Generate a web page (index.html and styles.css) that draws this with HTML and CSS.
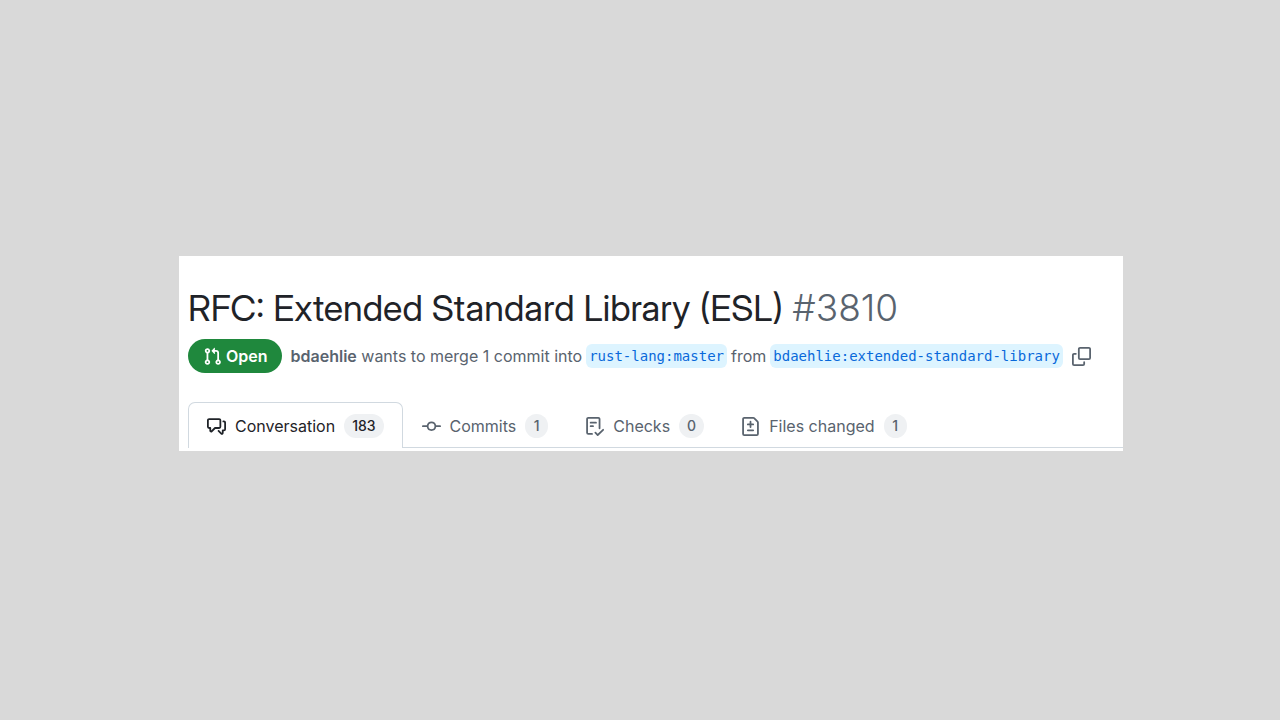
FILE: index.html
```html
<!DOCTYPE html>
<html lang="en">
<head>
<meta charset="utf-8">
<meta name="viewport" content="width=device-width, initial-scale=1">
<title>RFC: Extended Standard Library (ESL) #3810</title>
<link rel="stylesheet" href="styles.css">
</head>
<body>
<main class="pull-request">
  <header class="pr-header">
    <h1 class="pr-title">RFC: Extended Standard Library (ESL) <span class="pr-number">#3810</span></h1>
    <div class="pr-meta">
      <span class="state">
        <svg class="state-icon" viewBox="0 0 16 16" aria-hidden="true"><path d="M1.5 3.25a2.25 2.25 0 1 1 3 2.122v5.256a2.251 2.251 0 1 1-1.5 0V5.372A2.25 2.25 0 0 1 1.5 3.25Zm5.677-.177L9.573.677A.25.25 0 0 1 10 .854V2.5h1A2.5 2.5 0 0 1 13.5 5v5.628a2.251 2.251 0 1 1-1.5 0V5a1 1 0 0 0-1-1h-1v1.646a.25.25 0 0 1-.427.177L7.177 3.427a.25.25 0 0 1 0-.354ZM3.75 2.5a.75.75 0 1 0 0 1.5.75.75 0 0 0 0-1.5Zm0 9.5a.75.75 0 1 0 0 1.5.75.75 0 0 0 0-1.5Zm8.25.75a.75.75 0 1 0 1.5 0 .75.75 0 0 0-1.5 0Z"/></svg>
        Open
      </span>
      <div class="summary">
        <span><a class="author" href="#author">bdaehlie</a> wants to merge 1 commit into</span>
        <a class="branch" href="#base">rust-lang:master</a>
        <span>from</span>
        <a class="branch" href="#head">bdaehlie:extended-standard-library</a>
      </div>
      <button class="copy" type="button" aria-label="Copy branch name">
        <svg class="icon" viewBox="0 0 16 16" aria-hidden="true"><path d="M0 6.75C0 5.784.784 5 1.75 5h1.5a.75.75 0 0 1 0 1.5h-1.5a.25.25 0 0 0-.25.25v7.5c0 .138.112.25.25.25h7.5a.25.25 0 0 0 .25-.25v-1.5a.75.75 0 0 1 1.5 0v1.5A1.75 1.75 0 0 1 9.25 16h-7.5A1.75 1.75 0 0 1 0 14.25Z"/><path d="M5 1.75C5 .784 5.784 0 6.75 0h7.5C15.216 0 16 .784 16 1.75v7.5A1.75 1.75 0 0 1 14.25 11h-7.5A1.75 1.75 0 0 1 5 9.25Zm1.75-.25a.25.25 0 0 0-.25.25v7.5c0 .138.112.25.25.25h7.5a.25.25 0 0 0 .25-.25v-7.5a.25.25 0 0 0-.25-.25Z"/></svg>
      </button>
    </div>
  </header>
  <nav class="tabs" aria-label="Pull request">
    <a class="tab tab-current" href="#conversation" aria-current="page">
      <svg class="icon" viewBox="0 0 16 16" aria-hidden="true"><path d="M1.75 1h8.5c.966 0 1.75.784 1.75 1.75v5.5A1.75 1.75 0 0 1 10.25 10H7.061l-2.574 2.573A1.458 1.458 0 0 1 2 11.543V10h-.25A1.75 1.75 0 0 1 0 8.25v-5.5C0 1.784.784 1 1.75 1ZM1.5 2.75v5.5c0 .138.112.25.25.25h1a.75.75 0 0 1 .75.75v2.19l2.72-2.72a.749.749 0 0 1 .53-.22h3.5a.25.25 0 0 0 .25-.25v-5.5a.25.25 0 0 0-.25-.25h-8.5a.25.25 0 0 0-.25.25Zm13 2a.25.25 0 0 0-.25-.25h-.5a.75.75 0 0 1 0-1.5h.5c.966 0 1.75.784 1.75 1.75v5.5A1.75 1.75 0 0 1 14.25 12H14v1.543a1.458 1.458 0 0 1-2.487 1.03L9.22 12.28a.749.749 0 0 1 .326-1.275.749.749 0 0 1 .734.215l2.22 2.22v-2.19a.75.75 0 0 1 .75-.75h1a.25.25 0 0 0 .25-.25Z"/></svg>
      Conversation <span class="counter">183</span>
    </a>
    <a class="tab" href="#commits">
      <svg class="icon" viewBox="0 0 16 16" aria-hidden="true"><path d="M11.93 8.5a4.002 4.002 0 0 1-7.86 0H.75a.75.75 0 0 1 0-1.5h3.32a4.002 4.002 0 0 1 7.86 0h3.32a.75.75 0 0 1 0 1.5Zm-1.43-.75a2.5 2.5 0 1 0-5 0 2.5 2.5 0 0 0 5 0Z"/></svg>
      Commits <span class="counter">1</span>
    </a>
    <a class="tab" href="#checks">
      <svg class="icon" viewBox="0 0 16 16" aria-hidden="true"><path d="M2.5 1.75v11.5c0 .138.112.25.25.25h3.17a.75.75 0 0 1 0 1.5H2.75A1.75 1.75 0 0 1 1 13.25V1.75C1 .784 1.784 0 2.75 0h8.5C12.216 0 13 .784 13 1.75v7.736a.75.75 0 0 1-1.5 0V1.75a.25.25 0 0 0-.25-.25h-8.5a.25.25 0 0 0-.25.25Zm13.274 9.537v-.001l-4.557 4.45a.75.75 0 0 1-1.055-.008l-1.943-1.95a.75.75 0 0 1 1.062-1.058l1.419 1.425 4.026-3.932a.75.75 0 1 1 1.048 1.074ZM4.75 4h4.5a.75.75 0 0 1 0 1.5h-4.5a.75.75 0 0 1 0-1.5ZM4 7.75A.75.75 0 0 1 4.75 7h2a.75.75 0 0 1 0 1.5h-2A.75.75 0 0 1 4 7.75Z"/></svg>
      Checks <span class="counter">0</span>
    </a>
    <a class="tab" href="#files">
      <svg class="icon" viewBox="0 0 16 16" aria-hidden="true"><path d="M1 1.75C1 .784 1.784 0 2.75 0h7.586c.464 0 .909.184 1.237.513l2.914 2.914c.329.328.513.773.513 1.237v9.586A1.75 1.75 0 0 1 13.25 16H2.75A1.75 1.75 0 0 1 1 14.25Zm1.75-.25a.25.25 0 0 0-.25.25v12.5c0 .138.112.25.25.25h10.5a.25.25 0 0 0 .25-.25V4.664a.25.25 0 0 0-.073-.177l-2.914-2.914a.25.25 0 0 0-.177-.073ZM8 3.25a.75.75 0 0 1 .75.75v1.5h1.5a.75.75 0 0 1 0 1.5h-1.5v1.5a.75.75 0 0 1-1.5 0V7h-1.5a.75.75 0 0 1 0-1.5h1.5V4A.75.75 0 0 1 8 3.25Zm-3 8a.75.75 0 0 1 .75-.75h4.5a.75.75 0 0 1 0 1.5h-4.5a.75.75 0 0 1-.75-.75Z"/></svg>
      Files changed <span class="counter">1</span>
    </a>
  </nav>
</main>
</body>
</html>
```
FILE: styles.css
```css
* {
  box-sizing: border-box;
}

body {
  margin: 0;
  padding: 256px 157px 32px 179px;
  background: #d9d9d9;
  color: #59636e;
  font-family: Inter, "Liberation Sans", sans-serif;
  font-size: 16px;
  line-height: 24px;
}

a {
  color: inherit;
  text-decoration: none;
}

.pull-request {
  padding: 28px 0 3px 9px;
  background: #fff;
}

.pr-header {
  padding-bottom: 29px;
}

.pr-title {
  margin: 0 0 7px;
  color: #1f2328;
  font-family: "Inter Display", "Liberation Sans", sans-serif;
  font-size: 36px;
  font-weight: 400;
  line-height: 48px;
}

.pr-number {
  color: #59636e;
  font-family: Inter, "Liberation Sans", sans-serif;
  font-size: 37px;
  font-weight: 300;
}

.pr-meta {
  display: flex;
  flex-wrap: wrap;
  align-items: center;
  gap: 9px;
}

.state {
  display: flex;
  align-items: center;
  gap: 4px;
  padding: 5px 14px 5px 15px;
  border-radius: 20px;
  background: #1f883d;
  color: #fff;
  font-weight: 600;
}

.state-icon,
.icon {
  width: 19px;
  height: 19px;
  flex: none;
  fill: currentColor;
}

.summary {
  display: flex;
  flex-wrap: wrap;
  align-items: center;
  gap: 4px;
}

.author {
  font-weight: 600;
}

.branch {
  padding: 0 3px;
  border-radius: 6px;
  background: #ddf4ff;
  color: #0969da;
  font-family: "DejaVu Sans Mono", monospace;
  font-size: 14px;
}

.copy {
  display: flex;
  padding: 0;
  border: 0;
  background: none;
  color: inherit;
}

.tabs {
  display: flex;
  flex-wrap: wrap;
  box-shadow: inset 0 -1px #d1d9e0;
}

.tab {
  display: flex;
  align-items: center;
  gap: 9px;
  height: 46px;
  padding: 2px 18px 0 19px;
}

.tab-current {
  border: 1px solid #d1d9e0;
  border-bottom: 0;
  border-radius: 7px 7px 0 0;
  padding: 1px 18px 0;
  background: #fff;
  color: #1f2328;
}

.counter {
  min-width: 23px;
  padding: 0 8px;
  border-radius: 12px;
  background: #eff1f3;
  font-size: 14px;
  font-weight: 500;
  text-align: center;
}
```
